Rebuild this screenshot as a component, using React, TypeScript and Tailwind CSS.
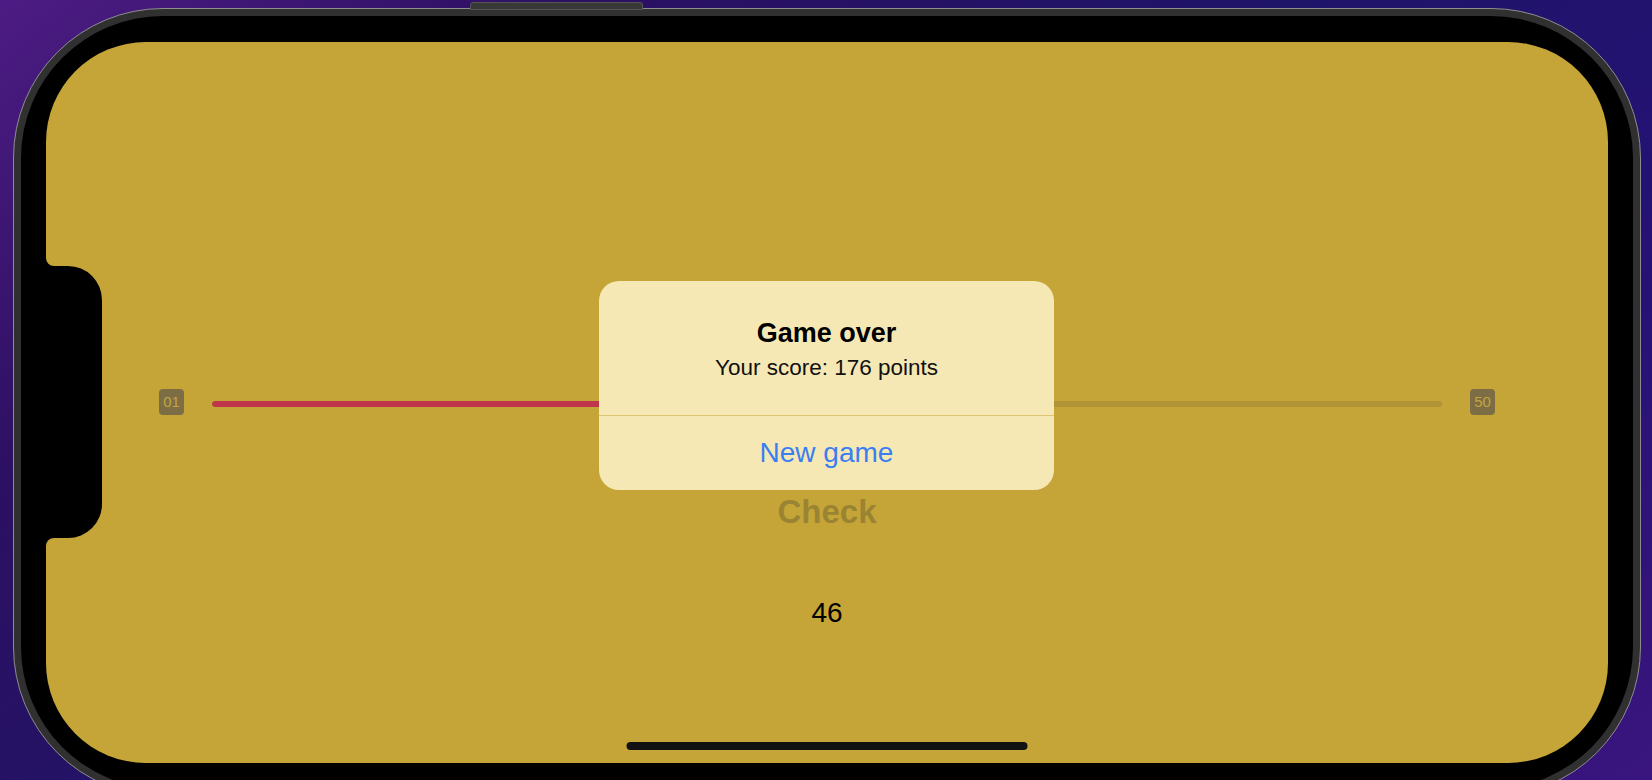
import React from 'react';

const FONT = { fontFamily: '"Liberation Sans", Arial, sans-serif' };

const Badge = ({ label }: { label: string }) => (
  <div className="w-[25px] h-[26px] rounded-[4px] bg-[#7c6d45] flex items-center justify-center text-[15px] text-[#c2a53c]">
    {label}
  </div>
);

const GameOverAlert = () => (
  <div className="absolute left-[553px] top-[239px] w-[455px] h-[209px] rounded-[20px] bg-[#f6e8b4] flex flex-col">
    <div className="h-[134px] flex flex-col items-center pt-[36px]">
      <p className="text-[27px] leading-[32px] font-bold text-black">Game over</p>
      <p className="mt-[5px] text-[22.5px] leading-[28px] text-[#111]">Your score: 176 points</p>
    </div>
    <div className="h-px bg-[#dcc673]" />
    <button className="flex-1 flex items-center justify-center text-[28px] leading-[34px] text-[#3a7ef2]">
      New game
    </button>
  </div>
);

export default function App() {
  return (
    <div
      style={FONT}
      className="relative w-[1652px] h-[780px] overflow-hidden pl-[13px] pt-[8px] bg-[linear-gradient(140deg,#4d1c84_0%,#2c1062_22%,#1e1468_50%,#261276_78%,#3a157e_100%)]"
    >
      {/* side button on top edge */}
      <div className="absolute left-[470px] top-[2px] w-[173px] h-[8px] rounded-t-[3px] bg-[#383838] border border-[#555]" />

      {/* phone frame */}
      <div className="w-[1628px] h-[789px] rounded-[150px] border border-[#8e8e8e] bg-[#303030] p-[7px]">
        <div className="w-full h-full rounded-[142px] bg-black pl-[25px] pt-[26px]">
          {/* screen */}
          <div className="relative w-[1562px] h-[721px] rounded-[100px] bg-[#c5a537] overflow-hidden flex flex-col items-center pt-[347px]">
            {/* notch */}
            <div className="absolute left-0 top-[224px] w-[56px] h-[272px] rounded-r-[34px] bg-black" />
            <div className="absolute left-0 top-[216px] w-[8px] h-[8px] bg-black">
              <div className="w-full h-full bg-[#c5a537] rounded-bl-[8px]" />
            </div>
            <div className="absolute left-0 top-[496px] w-[8px] h-[8px] bg-black">
              <div className="w-full h-full bg-[#c5a537] rounded-tl-[8px]" />
            </div>

            {/* slider */}
            <div className="w-full flex items-start px-[113px]">
              <Badge label="01" />
              <div className="flex-1 mx-[28px] mt-[12px] h-[6px] rounded-full bg-[#b09436] overflow-hidden">
                <div className="w-[45%] h-full rounded-full bg-[#bf354b]" />
              </div>
              <Badge label="50" />
            </div>

            <button className="mt-[77px] text-[33px] leading-[40px] font-bold text-[#9a8433]">Check</button>

            <p className="mt-[65px] text-[28px] leading-[32px] text-black">46</p>

            <GameOverAlert />

            {/* home indicator */}
            <div className="absolute bottom-[13px] left-1/2 -translate-x-1/2 w-[401px] h-[8px] rounded-full bg-[#121212]" />
          </div>
        </div>
      </div>
    </div>
  );
}
